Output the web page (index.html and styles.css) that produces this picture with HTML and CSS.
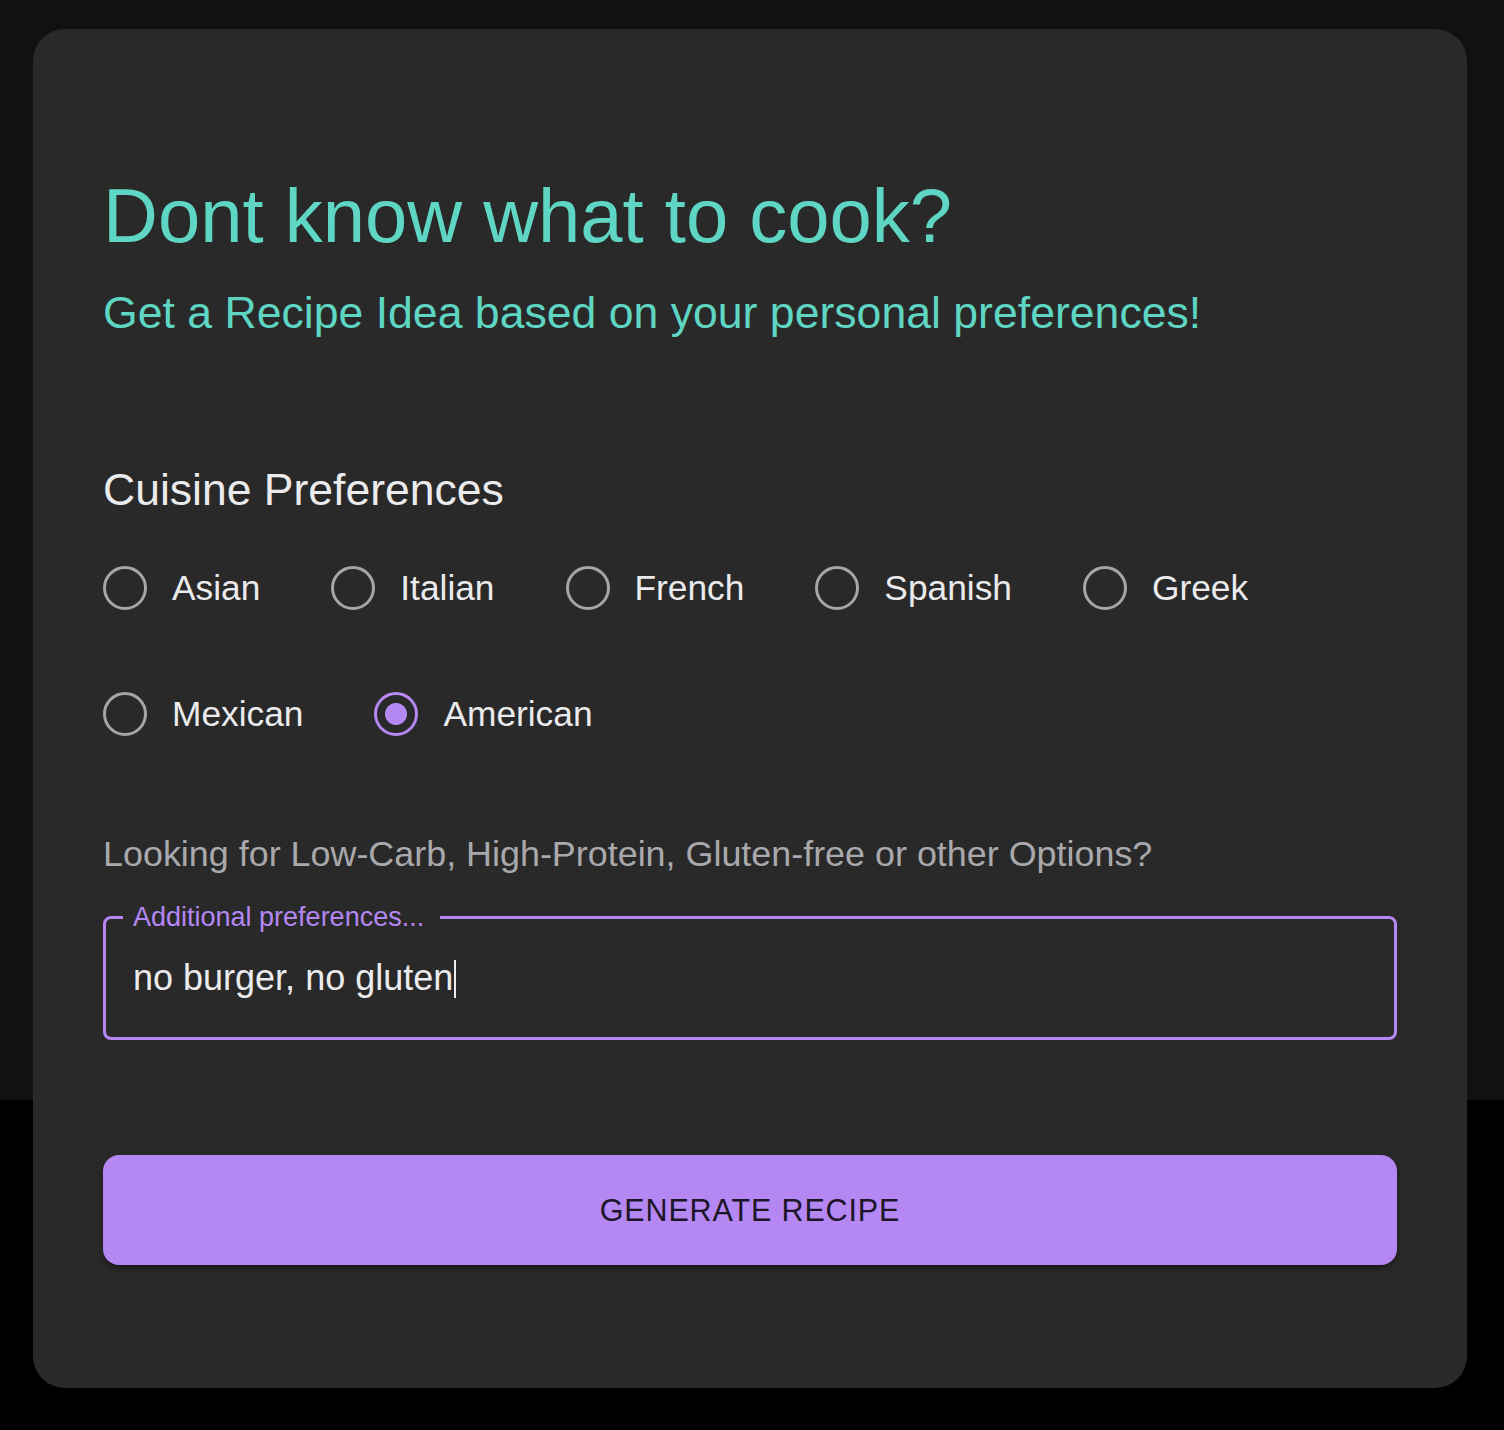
FILE: index.html
```html
<!DOCTYPE html>
<html lang="en">
<head>
  <meta charset="UTF-8">
  <meta name="viewport" content="width=device-width, initial-scale=1.0">
  <title>Recipe Idea</title>
  <link rel="stylesheet" href="styles.css">
</head>
<body>

  <div class="page">
    <div class="recipe-card">

      <h1 class="title">Dont know what to cook?</h1>
      <p class="subtitle">Get a Recipe Idea based on your personal preferences!</p>

      <h2 class="section-title">Cuisine Preferences</h2>
      <div class="cuisine-group">
        <label class="cuisine-option"><input type="radio" name="cuisine" value="asian"><span>Asian</span></label>
        <label class="cuisine-option"><input type="radio" name="cuisine" value="italian"><span>Italian</span></label>
        <label class="cuisine-option"><input type="radio" name="cuisine" value="french"><span>French</span></label>
        <label class="cuisine-option"><input type="radio" name="cuisine" value="spanish"><span>Spanish</span></label>
        <label class="cuisine-option"><input type="radio" name="cuisine" value="greek"><span>Greek</span></label>
        <label class="cuisine-option"><input type="radio" name="cuisine" value="mexican"><span>Mexican</span></label>
        <label class="cuisine-option"><input type="radio" name="cuisine" value="american" checked><span>American</span></label>
      </div>

      <p class="hint">Looking for Low-Carb, High-Protein, Gluten-free or other Options?</p>

      <fieldset class="pref-field">
        <legend>Additional preferences...</legend>
        <div class="pref-value">no burger, no gluten<span class="caret"></span></div>
      </fieldset>

      <button class="generate-btn">GENERATE RECIPE</button>

    </div>
  </div>

</body>
</html>
```

FILE: styles.css
```css
body {
  margin: 0;
  font-family: 'Liberation Sans', Arial, sans-serif;
  background: #000;
}

.page {
  padding: 29px 37px 42px 33px;
  background: linear-gradient(to bottom, #111111 1100px, #000000 1100px);
}

.recipe-card {
  width: 1434px;
  box-sizing: border-box;
  padding: 141px 70px 123px;
  background-color: #292929;
  border-radius: 32px;
}

.title {
  margin: 0;
  font-size: 76px;
  font-weight: 400;
  line-height: 1.2;
  color: #5ed6c3;
}

.subtitle {
  margin: 25px 0 0;
  font-size: 44.6px;
  line-height: 1.2;
  color: #5ed6c3;
}

.section-title {
  margin: 123px 0 0;
  font-size: 44.5px;
  font-weight: 400;
  line-height: 1.2;
  color: #ebebed;
}

.cuisine-group {
  display: flex;
  flex-wrap: wrap;
  column-gap: 71px;
  row-gap: 66px;
  margin-top: 42px;
}

.cuisine-option {
  display: flex;
  align-items: center;
  gap: 25px;
  height: 60px;
  font-size: 35.3px;
  color: #ebebed;
  cursor: pointer;
}

.cuisine-option input {
  appearance: none;
  margin: 0;
  width: 44px;
  height: 44px;
  box-sizing: border-box;
  border: 3.8px solid #a6a6a9;
  border-radius: 50%;
  cursor: pointer;
}

.cuisine-option input:checked {
  border-color: #b487f3;
  background: radial-gradient(circle, #b487f3 10.5px, transparent 11.5px);
}

.hint {
  margin: 89px 0 0;
  font-size: 35.9px;
  line-height: 1.2;
  color: #a9a9ad;
}

.pref-field {
  margin: 28px 0 0;
  padding: 25px 27px 38px;
  border: 3px solid #b487f3;
  border-radius: 8px;
}

.pref-field legend {
  margin-left: -10px;
  padding: 0 16px 0 10px;
  font-size: 27px;
  line-height: 27px;
  color: #b487f3;
}

.pref-value {
  height: 43px;
  line-height: 43px;
  font-size: 36px;
  color: #ececee;
}

.caret {
  display: inline-block;
  width: 2px;
  height: 38px;
  margin-left: 1px;
  vertical-align: -8px;
  background-color: #ececee;
}

.generate-btn {
  display: flex;
  align-items: center;
  justify-content: center;
  width: 100%;
  height: 110px;
  margin-top: 115px;
  border: none;
  border-radius: 16px;
  background-color: #b487f3;
  box-shadow: 0 6px 2px -4px rgba(0, 0, 0, 0.2), 0 4px 4px rgba(0, 0, 0, 0.14), 0 2px 10px rgba(0, 0, 0, 0.12);
  font-family: 'Liberation Sans', Arial, sans-serif;
  font-size: 30.5px;
  letter-spacing: 0.87px;
  color: #1d1528;
  cursor: pointer;
}
```
